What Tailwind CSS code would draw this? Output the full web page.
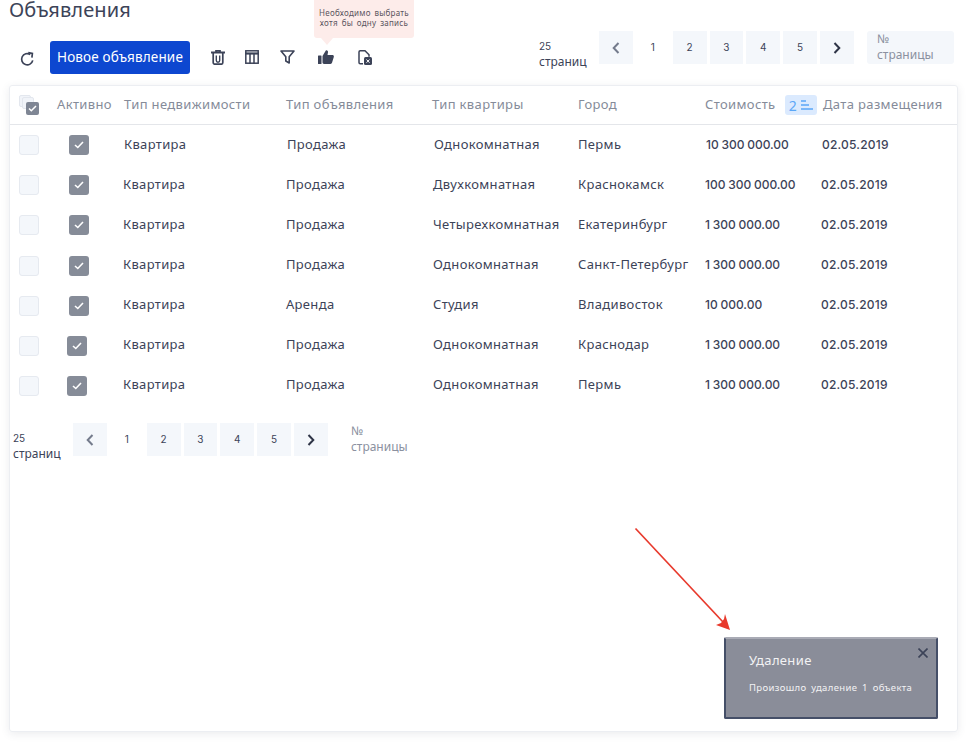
<!DOCTYPE html>
<html lang="ru"><head><meta charset="utf-8">
<script src="https://cdn.jsdelivr.net/npm/@tailwindcss/browser@4"></script>
</head>
<body class="relative w-[974px] h-[747px] overflow-hidden bg-white font-['Noto_Sans',sans-serif] text-[#3c4358]">
<h1 class="pl-[9px] text-[20px] leading-[20px] text-[#3c4358] tracking-[0.1px]">Объявления</h1>

<div class="flex items-start h-[44px] mt-[11px] pl-[20px]">
  <svg class="w-[15px] h-[16px] mt-[20px]" viewBox="0 0 16 16" fill="none" stroke="#3c4358" stroke-width="1.8"><path d="M13.6 9.5A6 6 0 1 1 11 3.2"/><path d="M8.8 1.2l4.4.9-.5 4.4"/></svg>
  <button class="ml-[15px] mt-[10px] w-[140px] h-[33px] rounded-[3px] bg-[#0d47d0] text-white text-[13.5px] tracking-[0.15px]">Новое объявление</button>
  <svg class="ml-[21px] w-[14px] h-[15px] mt-[19px]" viewBox="0 0 14 15" fill="none" stroke="#3c4358" stroke-width="1.700"><path d="M0 2.500h14" stroke-width="2"/><path d="M5 2V.8h4V2"/><path d="M2.200 3v9.500A1.700 1.700 0 0 0 3.900 14.200h6.200a1.700 1.700 0 0 0 1.700-1.700V3"/><path d="M5.300 5.500v5a1.700 1.700 0 0 0 3.400 0v-5" stroke-width="1.400"/></svg>
  <svg class="ml-[20px] w-[14px] h-[14px] mt-[19px]" viewBox="0 0 14 14" fill="none" stroke="#3c4358" stroke-width="1.500"><rect x=".8" y=".8" width="12.400" height="12.400"/><path d="M0 3.500h14" stroke-width="2.200"/><path d="M5 4v10M9 4v10"/></svg>
  <svg class="ml-[21px] w-[15px] h-[14px] mt-[19px]" viewBox="0 0 15 14" fill="none" stroke="#3c4358" stroke-width="1.600" stroke-linejoin="round"><path d="M1 1h13L9.200 6.800V13L5.800 11V6.800z"/></svg>
  <svg class="ml-[23px] w-[16px] h-[14px] mt-[19px]" viewBox="0 0 16 14" fill="#3c4358"><rect x="0" y="5.500" width="3.500" height="8.500" rx=".5"/><path d="M4.500 6L8 0.300c1.300-.3 2.200.7 2 2L9.500 5H14.500c1 0 1.600 1 1.300 1.900l-1.800 5.900c-.2.700-.8 1.200-1.500 1.200H6c-.8 0-1.500-.6-1.500-1.400z"/></svg>
  <svg class="ml-[24px] w-[14px] h-[15px] mt-[19px]" viewBox="0 0 14 15" fill="none" stroke="#3c4358" stroke-width="1.500"><path d="M5 13.700H2.200A1.200 1.200 0 0 1 1 12.500V2A1.200 1.200 0 0 1 2.200.800h4.800l4 4v2"/><rect x="6" y="7" width="8" height="8" rx="1.500" fill="#3c4358" stroke="none"/><path d="M8.500 9.500l3 3.200M11.500 9.500l-3 3.200" stroke="#fff" stroke-width="1"/></svg>

  <div class="flex ml-[167px] items-start">
    <div class="w-[60px] pt-[7px] text-[12px] leading-[16px]"><span class="font-['Inter',sans-serif] text-[10px]">25</span><br>страниц</div>
    <div class="flex gap-[3px]">
      <span class="w-[33.85px] h-[33px] grid place-items-center bg-[#f4f7fb]"><svg class="w-[8px] h-[12px]" viewBox="0 0 8 12" fill="none" stroke="#747b8c" stroke-width="2"><path d="M6.500 1L1.700 6l4.800 5"/></svg></span>
      <span class="w-[33.85px] h-[33px] grid place-items-center font-['Inter',sans-serif] text-[10px]">1</span>
      <span class="w-[33.85px] h-[33px] grid place-items-center bg-[#f4f7fb] font-['Inter',sans-serif] text-[10px]">2</span>
      <span class="w-[33.85px] h-[33px] grid place-items-center bg-[#f4f7fb] font-['Inter',sans-serif] text-[10px]">3</span>
      <span class="w-[33.85px] h-[33px] grid place-items-center bg-[#f4f7fb] font-['Inter',sans-serif] text-[10px]">4</span>
      <span class="w-[33.85px] h-[33px] grid place-items-center bg-[#f4f7fb] font-['Inter',sans-serif] text-[10px]">5</span>
      <span class="w-[33.85px] h-[33px] grid place-items-center bg-[#f4f7fb]"><svg class="w-[8px] h-[12px]" viewBox="0 0 8 12" fill="none" stroke="#2f3547" stroke-width="2"><path d="M1.500 1l4.800 5-4.800 5"/></svg></span>
    </div>
    <div class="ml-[13px] w-[87px] h-[33px] rounded-[3px] bg-[#f4f7fb] pl-[10px] text-[12px] leading-[16px] text-[#8b91a0]">№<br>страницы</div>
  </div>
</div>

<main class="relative mt-[10px] ml-[9px] w-[949px] h-[647px] rounded-[3px] border border-[#eceef2] shadow-[0_2px_8px_rgba(60,67,88,0.10)] text-[13px]">
  <div class="grid grid-cols-[38px_67px_162px_146px_146px_127px_81px_38px_1fr] items-center h-[39px] pl-[9px] border-b border-[#e4e6ea] text-[#858b99] tracking-[0.36px]">
    <span class="relative block w-[20px] h-[16px]">
      <i class="absolute left-0 top-[-2px] w-[12px] h-[12px] rounded-[2px] bg-[#f1f4f9] border border-[#e3e7ee]"></i>
      <i class="absolute left-[3px] top-0 w-[12px] h-[12px] rounded-[2px] bg-[#f1f4f9] border border-[#e3e7ee]"></i>
      <span class="absolute left-[7px] top-[5px] w-[13px] h-[13px] rounded-[2px] bg-[#7f8694] grid place-items-center"><svg class="w-[9px] h-[7px]" viewBox="0 0 9 7" fill="none" stroke="#fff" stroke-width="1.500"><path d="M1 3.500l2.300 2.200L8 1"/></svg></span>
    </span>
    <span>Активно</span><span>Тип недвижимости</span><span>Тип объявления</span><span>Тип квартиры</span><span>Город</span><span>Стоимость</span>
    <span class="ml-[-1px] w-[32px] h-[20px] rounded-[3px] bg-[#dbeafe] flex items-center justify-center gap-[4px] text-[#5ba7f7] text-[14px]">2<svg class="w-[12px] h-[10px]" viewBox="0 0 12 10" fill="none" stroke="#5ba7f7" stroke-width="1.400"><path d="M0 1h5M0 5h8M0 9h12"/></svg></span>
    <span class="ml-[-1px]">Дата размещения</span>
  </div>

  <div class="grid grid-cols-[50px_55px_163px_147px_144px_128px_116px_1fr] items-center h-[40px] pl-[9px] text-[#3c4358] tracking-[0.33px]">
    <i class="w-[20px] h-[20px] rounded-[3px] bg-[#f4f7fb] border border-[#e6eaf0]"></i>
    <span class="w-[20px] h-[20px] rounded-[3px] bg-[#868c98] grid place-items-center"><svg class="w-[10px] h-[8px]" viewBox="0 0 10 8" fill="none" stroke="#fff" stroke-width="1.600"><path d="M1 4l2.800 2.500L9 1"/></svg></span>
    <span>Квартира</span><span>Продажа</span><span>Однокомнатная</span><span>Пермь</span>
    <span class="font-['Inter',sans-serif] font-medium text-[12px] tracking-[0] [word-spacing:-0.5px]">10 300 000.00</span><span class="font-['Inter',sans-serif] font-medium text-[12px] tracking-[0.2px]">02.05.2019</span>
  </div>
  <div class="grid grid-cols-[50px_54px_163px_147px_145px_127px_116px_1fr] items-center h-[40px] pl-[9px] text-[#3c4358] tracking-[0.33px]">
    <i class="w-[20px] h-[20px] rounded-[3px] bg-[#f4f7fb] border border-[#e6eaf0]"></i>
    <span class="w-[20px] h-[20px] rounded-[3px] bg-[#868c98] grid place-items-center"><svg class="w-[10px] h-[8px]" viewBox="0 0 10 8" fill="none" stroke="#fff" stroke-width="1.600"><path d="M1 4l2.800 2.500L9 1"/></svg></span>
    <span>Квартира</span><span>Продажа</span><span>Двухкомнатная</span><span>Краснокамск</span>
    <span class="font-['Inter',sans-serif] font-medium text-[12px] tracking-[0] [word-spacing:-0.5px]">100 300 000.00</span><span class="font-['Inter',sans-serif] font-medium text-[12px] tracking-[0.2px]">02.05.2019</span>
  </div>
  <div class="grid grid-cols-[50px_54px_163px_147px_145px_127px_116px_1fr] items-center h-[40px] pl-[9px] text-[#3c4358] tracking-[0.33px]">
    <i class="w-[20px] h-[20px] rounded-[3px] bg-[#f4f7fb] border border-[#e6eaf0]"></i>
    <span class="w-[20px] h-[20px] rounded-[3px] bg-[#868c98] grid place-items-center"><svg class="w-[10px] h-[8px]" viewBox="0 0 10 8" fill="none" stroke="#fff" stroke-width="1.600"><path d="M1 4l2.800 2.500L9 1"/></svg></span>
    <span>Квартира</span><span>Продажа</span><span>Четырехкомнатная</span><span>Екатеринбург</span>
    <span class="font-['Inter',sans-serif] font-medium text-[12px] tracking-[0] [word-spacing:-0.5px]">1 300 000.00</span><span class="font-['Inter',sans-serif] font-medium text-[12px] tracking-[0.2px]">02.05.2019</span>
  </div>
  <div class="grid grid-cols-[50px_54px_163px_147px_145px_127px_116px_1fr] items-center h-[40px] pl-[9px] text-[#3c4358] tracking-[0.33px]">
    <i class="w-[20px] h-[20px] mt-[2px] rounded-[3px] bg-[#f4f7fb] border border-[#e6eaf0]"></i>
    <span class="w-[20px] h-[20px] mt-[2px] rounded-[3px] bg-[#868c98] grid place-items-center"><svg class="w-[10px] h-[8px]" viewBox="0 0 10 8" fill="none" stroke="#fff" stroke-width="1.600"><path d="M1 4l2.800 2.500L9 1"/></svg></span>
    <span>Квартира</span><span>Продажа</span><span>Однокомнатная</span><span>Санкт-Петербург</span>
    <span class="font-['Inter',sans-serif] font-medium text-[12px] tracking-[0] [word-spacing:-0.5px]">1 300 000.00</span><span class="font-['Inter',sans-serif] font-medium text-[12px] tracking-[0.2px]">02.05.2019</span>
  </div>
  <div class="grid grid-cols-[50px_54px_163px_147px_145px_127px_116px_1fr] items-center h-[40px] pl-[9px] text-[#3c4358] tracking-[0.33px]">
    <i class="w-[20px] h-[20px] mt-[2px] rounded-[3px] bg-[#f4f7fb] border border-[#e6eaf0]"></i>
    <span class="w-[20px] h-[20px] mt-[2px] rounded-[3px] bg-[#868c98] grid place-items-center"><svg class="w-[10px] h-[8px]" viewBox="0 0 10 8" fill="none" stroke="#fff" stroke-width="1.600"><path d="M1 4l2.800 2.500L9 1"/></svg></span>
    <span>Квартира</span><span>Аренда</span><span>Студия</span><span>Владивосток</span>
    <span class="font-['Inter',sans-serif] font-medium text-[12px] tracking-[0] [word-spacing:-0.5px]">10 000.00</span><span class="font-['Inter',sans-serif] font-medium text-[12px] tracking-[0.2px]">02.05.2019</span>
  </div>
  <div class="grid grid-cols-[48px_56px_163px_147px_145px_127px_116px_1fr] items-center h-[40px] pl-[9px] text-[#3c4358] tracking-[0.33px]">
    <i class="w-[20px] h-[20px] mt-[2px] rounded-[3px] bg-[#f4f7fb] border border-[#e6eaf0]"></i>
    <span class="w-[20px] h-[20px] mt-[2px] rounded-[3px] bg-[#868c98] grid place-items-center"><svg class="w-[10px] h-[8px]" viewBox="0 0 10 8" fill="none" stroke="#fff" stroke-width="1.600"><path d="M1 4l2.800 2.500L9 1"/></svg></span>
    <span>Квартира</span><span>Продажа</span><span>Однокомнатная</span><span>Краснодар</span>
    <span class="font-['Inter',sans-serif] font-medium text-[12px] tracking-[0] [word-spacing:-0.5px]">1 300 000.00</span><span class="font-['Inter',sans-serif] font-medium text-[12px] tracking-[0.2px]">02.05.2019</span>
  </div>
  <div class="grid grid-cols-[48px_56px_163px_147px_145px_127px_116px_1fr] items-center h-[40px] pl-[9px] text-[#3c4358] tracking-[0.33px]">
    <i class="w-[20px] h-[20px] mt-[2px] rounded-[3px] bg-[#f4f7fb] border border-[#e6eaf0]"></i>
    <span class="w-[20px] h-[20px] mt-[2px] rounded-[3px] bg-[#868c98] grid place-items-center"><svg class="w-[10px] h-[8px]" viewBox="0 0 10 8" fill="none" stroke="#fff" stroke-width="1.600"><path d="M1 4l2.800 2.500L9 1"/></svg></span>
    <span>Квартира</span><span>Продажа</span><span>Однокомнатная</span><span>Пермь</span>
    <span class="font-['Inter',sans-serif] font-medium text-[12px] tracking-[0] [word-spacing:-0.5px]">1 300 000.00</span><span class="font-['Inter',sans-serif] font-medium text-[12px] tracking-[0.2px]">02.05.2019</span>
  </div>

  <div class="flex items-start mt-[18px] pl-[3px]">
    <div class="w-[60px] pt-[7px] text-[12px] leading-[16px]"><span class="font-['Inter',sans-serif] text-[10px]">25</span><br>страниц</div>
    <div class="flex gap-[3px]">
      <span class="w-[33.85px] h-[33px] grid place-items-center bg-[#f4f7fb]"><svg class="w-[8px] h-[12px]" viewBox="0 0 8 12" fill="none" stroke="#747b8c" stroke-width="2"><path d="M6.500 1L1.700 6l4.800 5"/></svg></span>
      <span class="w-[33.85px] h-[33px] grid place-items-center font-['Inter',sans-serif] text-[10px]">1</span>
      <span class="w-[33.85px] h-[33px] grid place-items-center bg-[#f4f7fb] font-['Inter',sans-serif] text-[10px]">2</span>
      <span class="w-[33.85px] h-[33px] grid place-items-center bg-[#f4f7fb] font-['Inter',sans-serif] text-[10px]">3</span>
      <span class="w-[33.85px] h-[33px] grid place-items-center bg-[#f4f7fb] font-['Inter',sans-serif] text-[10px]">4</span>
      <span class="w-[33.85px] h-[33px] grid place-items-center bg-[#f4f7fb] font-['Inter',sans-serif] text-[10px]">5</span>
      <span class="w-[33.85px] h-[33px] grid place-items-center bg-[#f4f7fb]"><svg class="w-[8px] h-[12px]" viewBox="0 0 8 12" fill="none" stroke="#2f3547" stroke-width="2"><path d="M1.500 1l4.800 5-4.800 5"/></svg></span>
    </div>
    <div class="ml-[13px] w-[87px] h-[33px] pl-[10px] text-[12px] leading-[16px] text-[#8b91a0]">№<br>страницы</div>
  </div>
</main>

<div class="absolute left-[314px] top-0 w-[100px] h-[38px] rounded-b-[3px] bg-[#fdecea] pt-[8px] text-center text-[8px] leading-[10.3px] tracking-[0.25px] [word-spacing:1.5px] text-[#5a5560]">Необходимо выбрать<br>хотя бы одну запись</div>
<div class="absolute left-[321px] top-[38px] w-0 h-0 border-x-[6px] border-x-transparent border-t-[7px] border-t-[#fdecea]"></div>

<svg class="absolute left-[630px] top-[525px] w-[105px] h-[112px]" viewBox="0 0 105 112" fill="none"><path d="M5.500 3.500L93 97" stroke="#e8392c" stroke-width="1.700"/><path d="M100 105L86 100l5-2 3-4 1-5z" fill="#e8392c"/></svg>

<div class="absolute left-[724px] top-[637px] w-[214px] h-[82px] rounded-[2px] bg-[#8a8d99] border-2 border-[#454f68] border-t-[#a9abb5] pl-[23px] text-white">
  <p class="mt-[12px] text-[13px] leading-[18px] tracking-[0.35px] text-[#f2f2f4]">Удаление</p>
  <p class="mt-[12px] text-[9.500px] leading-[13px] tracking-[0.35px] [word-spacing:2px] text-[#f2f2f4]">Произошло удаление 1 объекта</p>
  <svg class="absolute right-[8px] top-[9px] w-[10px] h-[10px]" viewBox="0 0 10 10" fill="none" stroke="#3c4358" stroke-width="1.600"><path d="M.5.500l9 9M9.500.500l-9 9"/></svg>
</div>
</body></html>
